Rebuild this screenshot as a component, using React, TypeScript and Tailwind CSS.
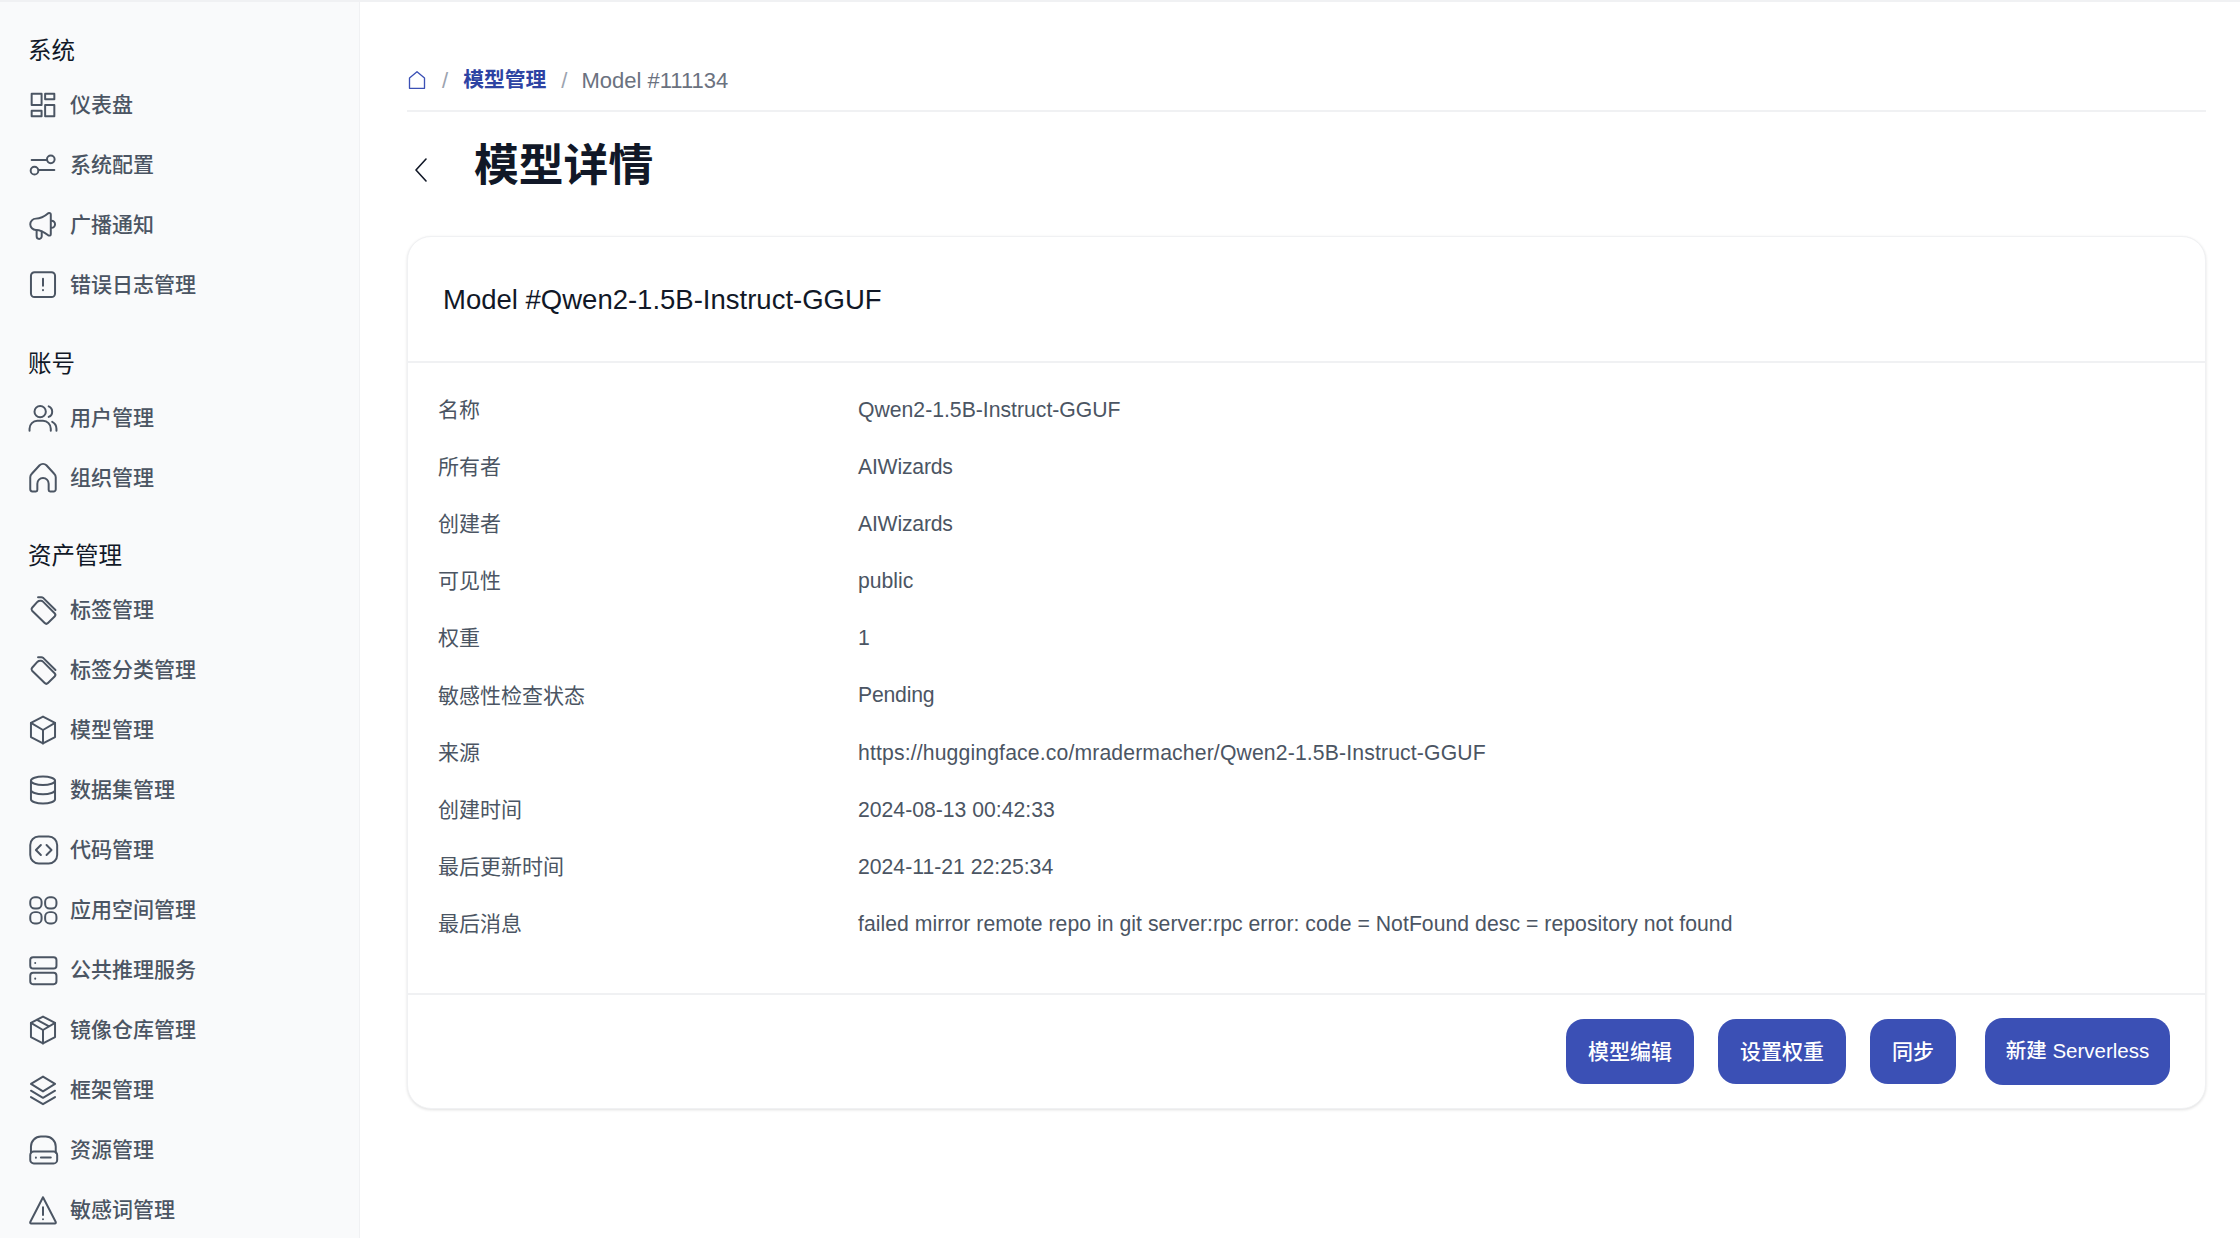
import type { ReactNode } from 'react'

const FONT = 'font-["Liberation_Sans","Noto_Sans_CJK_SC",sans-serif]'

function Ico({ children }: { children: ReactNode }) {
  return (
    <svg
      viewBox="0 0 24 24"
      fill="none"
      stroke="currentColor"
      strokeWidth={1.4}
      strokeLinecap="round"
      strokeLinejoin="round"
      className="w-[34px] h-[34px] shrink-0 ml-[-2.5px]"
    >
      {children}
    </svg>
  )
}

const tagIcon = (
  <Ico>
    <path d="M4.300 10.400 8 6.300c.6-.6 1.200-.8 2-.8h.6c.5 0 1 .2 1.400.6l8.200 8.200c.8.800.8 1.500 0 2.300l-4.700 4.600c-.8.800-1.500.8-2.300 0L4.300 12.500c-.6-.7-.6-1.400 0-2.100z" />
    <path d="M8.500 3h2.300c.6 0 1 .2 1.500.6l8.500 8.400" />
  </Ico>
)

const icons: Record<string, ReactNode> = {
  dashboard: (
    <Ico>
      <path d="M4 4h7v8H4zM4 16h7v4H4zM13.500 4H20v4h-6.500zM13.500 12H20v8h-6.500z" />
    </Ico>
  ),
  config: (
    <Ico>
      <path d="M4 8.500h11M9 15.500h11" />
      <circle cx="17.500" cy="8" r="2.700" />
      <circle cx="6" cy="16" r="2.700" />
    </Ico>
  ),
  speaker: (
    <Ico>
      <path d="M17.500 4.500v14c0 1-1 1.200-1.800.800C13 17 10.500 15.500 7 15.500 4.800 15.500 3 13.500 3 11.500S4.800 7.500 7 7.500c3.500 0 6-1.500 8.700-3.800.8-.4 1.800 0 1.800.800z" />
      <path d="M18 9a2.500 2.500 0 0 1 0 5M7.500 15.500V20a1.800 1.800 0 0 0 3.600 0v-3.500" />
    </Ico>
  ),
  alert: (
    <Ico>
      <rect x="3.500" y="3" width="17" height="17.500" rx="2.500" />
      <path d="M12 7.500v5M12 15.500v.2" />
    </Ico>
  ),
  users: (
    <Ico>
      <circle cx="10" cy="7.500" r="4" />
      <path d="M2.500 21v-1.500A5.500 5.500 0 0 1 8 14h4a5.500 5.500 0 0 1 5.500 5.500V21M16 3.800a4 4 0 0 1 0 7.400M21.500 21v-1.500a5.500 5.500 0 0 0-3-4.800" />
    </Ico>
  ),
  org: (
    <Ico>
      <path d="M3 20V11.500c0-1 .4-1.800 1.100-2.500l5.500-6c1.300-1.200 3.500-1.200 4.800 0l5.500 6c.7.700 1.100 1.500 1.100 2.500V20a1.500 1.500 0 0 1-1.500 1.500H17a1 1 0 0 1-1-1V16a4 4 0 0 0-8 0v4.500a1 1 0 0 1-1 1H4.500A1.500 1.500 0 0 1 3 20z" />
    </Ico>
  ),
  tag: tagIcon,
  box: (
    <Ico>
      <path d="M12 2.500 20.500 7v10L12 21.500 3.500 17V7z" />
      <path d="M3.500 7 12 12l8.500-5M12 12v9.500" />
    </Ico>
  ),
  db: (
    <Ico>
      <ellipse cx="12" cy="5.500" rx="8.500" ry="3" />
      <path d="M3.500 5.500v13c0 1.700 3.800 3 8.500 3s8.500-1.300 8.500-3v-13M3.500 12c0 1.700 3.800 3 8.500 3s8.500-1.300 8.500-3" />
    </Ico>
  ),
  code: (
    <Ico>
      <rect x="3" y="2.500" width="19" height="19" rx="6" />
      <path d="m10.500 8.500-3.500 3.500 3.500 3.500M14.500 8.500l3.500 3.500-3.500 3.500" />
    </Ico>
  ),
  apps: (
    <Ico>
      <rect x="3" y="3" width="8" height="8" rx="3.200" />
      <rect x="13.500" y="3" width="8" height="8" rx="3.200" />
      <rect x="3" y="13.500" width="8" height="8" rx="3.200" />
      <rect x="13.500" y="13.500" width="8" height="8" rx="3.200" />
    </Ico>
  ),
  server: (
    <Ico>
      <rect x="3" y="3" width="18.500" height="8" rx="2" />
      <rect x="3" y="14" width="18.500" height="8" rx="2" />
      <path d="M6.500 7v.1M6.500 18v.1" />
    </Ico>
  ),
  pkg: (
    <Ico>
      <path d="M12 2.500 20.500 7v10L12 21.500 3.500 17V7z" />
      <path d="M3.500 7 12 12l8.500-5M12 12v9.500M7.800 4.800l8.500 4.600" />
    </Ico>
  ),
  layers: (
    <Ico>
      <path d="m12 2.500 8.500 5.200L12 13 3.500 7.700z" />
      <path d="m3.500 12.500 8.500 5 8.500-5M3.500 17l8.500 5 8.500-5" />
    </Ico>
  ),
  drive: (
    <Ico>
      <path d="M3.500 14V9.500a7 7 0 0 1 7-7h3.500a7 7 0 0 1 7 7V14" />
      <rect x="3" y="13" width="19" height="8.500" rx="2.500" />
      <path d="M7 17.300v.1M10.500 17.300h7" />
    </Ico>
  ),
  warn: (
    <Ico>
      <path d="M12 3 3 20.500c-.2.500 0 1 .6 1h16.800c.6 0 .8-.5.6-1z" />
      <path d="M12 10v5.500M12 18.500v.1" />
    </Ico>
  ),
}

const groups = [
  {
    title: '系统',
    items: [
      ['dashboard', '仪表盘'],
      ['config', '系统配置'],
      ['speaker', '广播通知'],
      ['alert', '错误日志管理'],
    ],
  },
  {
    title: '账号',
    items: [
      ['users', '用户管理'],
      ['org', '组织管理'],
    ],
  },
  {
    title: '资产管理',
    items: [
      ['tag', '标签管理'],
      ['tag', '标签分类管理'],
      ['box', '模型管理'],
      ['db', '数据集管理'],
      ['code', '代码管理'],
      ['apps', '应用空间管理'],
      ['server', '公共推理服务'],
      ['pkg', '镜像仓库管理'],
      ['layers', '框架管理'],
      ['drive', '资源管理'],
      ['warn', '敏感词管理'],
    ],
  },
]

const rows = [
  ['名称', 'Qwen2-1.5B-Instruct-GGUF', ''],
  ['所有者', 'AIWizards', 'tracking-[-0.2px]'],
  ['创建者', 'AIWizards', 'tracking-[-0.2px]'],
  ['可见性', 'public', ''],
  ['权重', '1', ''],
  ['敏感性检查状态', 'Pending', 'tracking-[-0.2px]'],
  ['来源', 'https://huggingface.co/mradermacher/Qwen2-1.5B-Instruct-GGUF', 'tracking-[0.14px]'],
  ['创建时间', '2024-08-13 00:42:33', ''],
  ['最后更新时间', '2024-11-21 22:25:34', ''],
  ['最后消息', 'failed mirror remote repo in git server:rpc error: code = NotFound desc = repository not found', 'tracking-[0.045px]'],
]

export default function App() {
  return (
    <div className={`${FONT} h-[1238px] overflow-hidden bg-white border-t-2 border-[#f0f1f3] flex`}>
      {/* 사이드바 */}
      <aside className="w-[360px] shrink-0 bg-[#f9fafb] border-r border-[#f0f1f3] pl-[28px] pt-[33px]">
        {groups.map((g) => (
          <div key={g.title} className="mb-[32.500px]">
            <div className="h-[34px] flex items-center text-[23.500px] text-[#111827]">{g.title}</div>
            <div className="mt-[6px]">
              {g.items.map(([icon, label]) => (
                <div key={label} className="h-[60px] flex items-center gap-[10.500px] text-[21px] font-medium text-[#4b5563]">
                  {icons[icon]}
                  <span>{label}</span>
                </div>
              ))}
            </div>
          </div>
        ))}
      </aside>

      <main className="flex-1 pl-[47px] pr-[34px]">
        <div className="h-[110px] pt-[48px] border-b-2 border-[#f0f1f3] flex items-center text-[22px] text-[#6b7280]">
          <svg viewBox="0 0 24 24" fill="none" stroke="#3b50b5" strokeWidth={1.6} strokeLinejoin="round" className="w-[20px] h-[22px]">
            <path d="M3 22V9.500L12 2l9 7.500V22z" />
          </svg>
          <span className="mx-[15px] text-[#9ca3af]">/</span>
          <span className="font-semibold text-[20.800px] text-[#2d43a3]">模型管理</span>
          <span className="ml-[15px] mr-[14px] text-[#9ca3af]">/</span>
          <span>Model #111134</span>
        </div>

        <div className="h-[124px] pb-[16px] flex items-center">
          <svg viewBox="0 0 12 24" fill="none" stroke="#111827" strokeWidth={1.600} strokeLinecap="round" strokeLinejoin="round" className="w-[12px] h-[24px] ml-[8px] mt-[7px]">
            <path d="M11 1 1 12l10 11" />
          </svg>
          <h1 className="ml-[47px] text-[44.800px] font-bold text-[#111827]">模型详情</h1>
        </div>

        <section className="h-[873px] rounded-[24px] border border-[#f0f1f3] shadow-[0_1px_3px_rgba(0,0,0,0.12)] bg-white flex flex-col">
          <div className="h-[126px] shrink-0 pt-[2px] border-b-2 border-[#f0f1f3] pl-[35px] flex items-center text-[27.500px] text-[#111827]">
            Model #Qwen2-1.5B-Instruct-GGUF
          </div>
          <div className="flex-1 pt-[18px] pl-[30px]">
            {rows.map(([k, v, extra]) => (
              <div key={k} className="h-[57.150px] flex items-center text-[21px] text-[#4b5563]">
                <span className="w-[420px] shrink-0">{k}</span>
                <span className={`text-[21.200px] ${extra}`}>{v}</span>
              </div>
            ))}
          </div>
          <div className="h-[115px] shrink-0 border-t-2 border-[#f0f1f3] pr-[35px] flex items-center justify-end text-[21px] text-white">
            <button className="w-[128px] h-[65px] rounded-[18px] bg-[#3b50b5] font-medium">模型编辑</button>
            <button className="ml-[24px] w-[128px] h-[65px] rounded-[18px] bg-[#3b50b5] font-medium">设置权重</button>
            <button className="ml-[24px] w-[86px] h-[65px] rounded-[18px] bg-[#3b50b5] font-medium">同步</button>
            <button className="ml-[29px] w-[185px] h-[67px] rounded-[18px] bg-[#3b50b5] font-medium text-[20.500px]">新建 Serverless</button>
          </div>
        </section>
      </main>
    </div>
  )
}
